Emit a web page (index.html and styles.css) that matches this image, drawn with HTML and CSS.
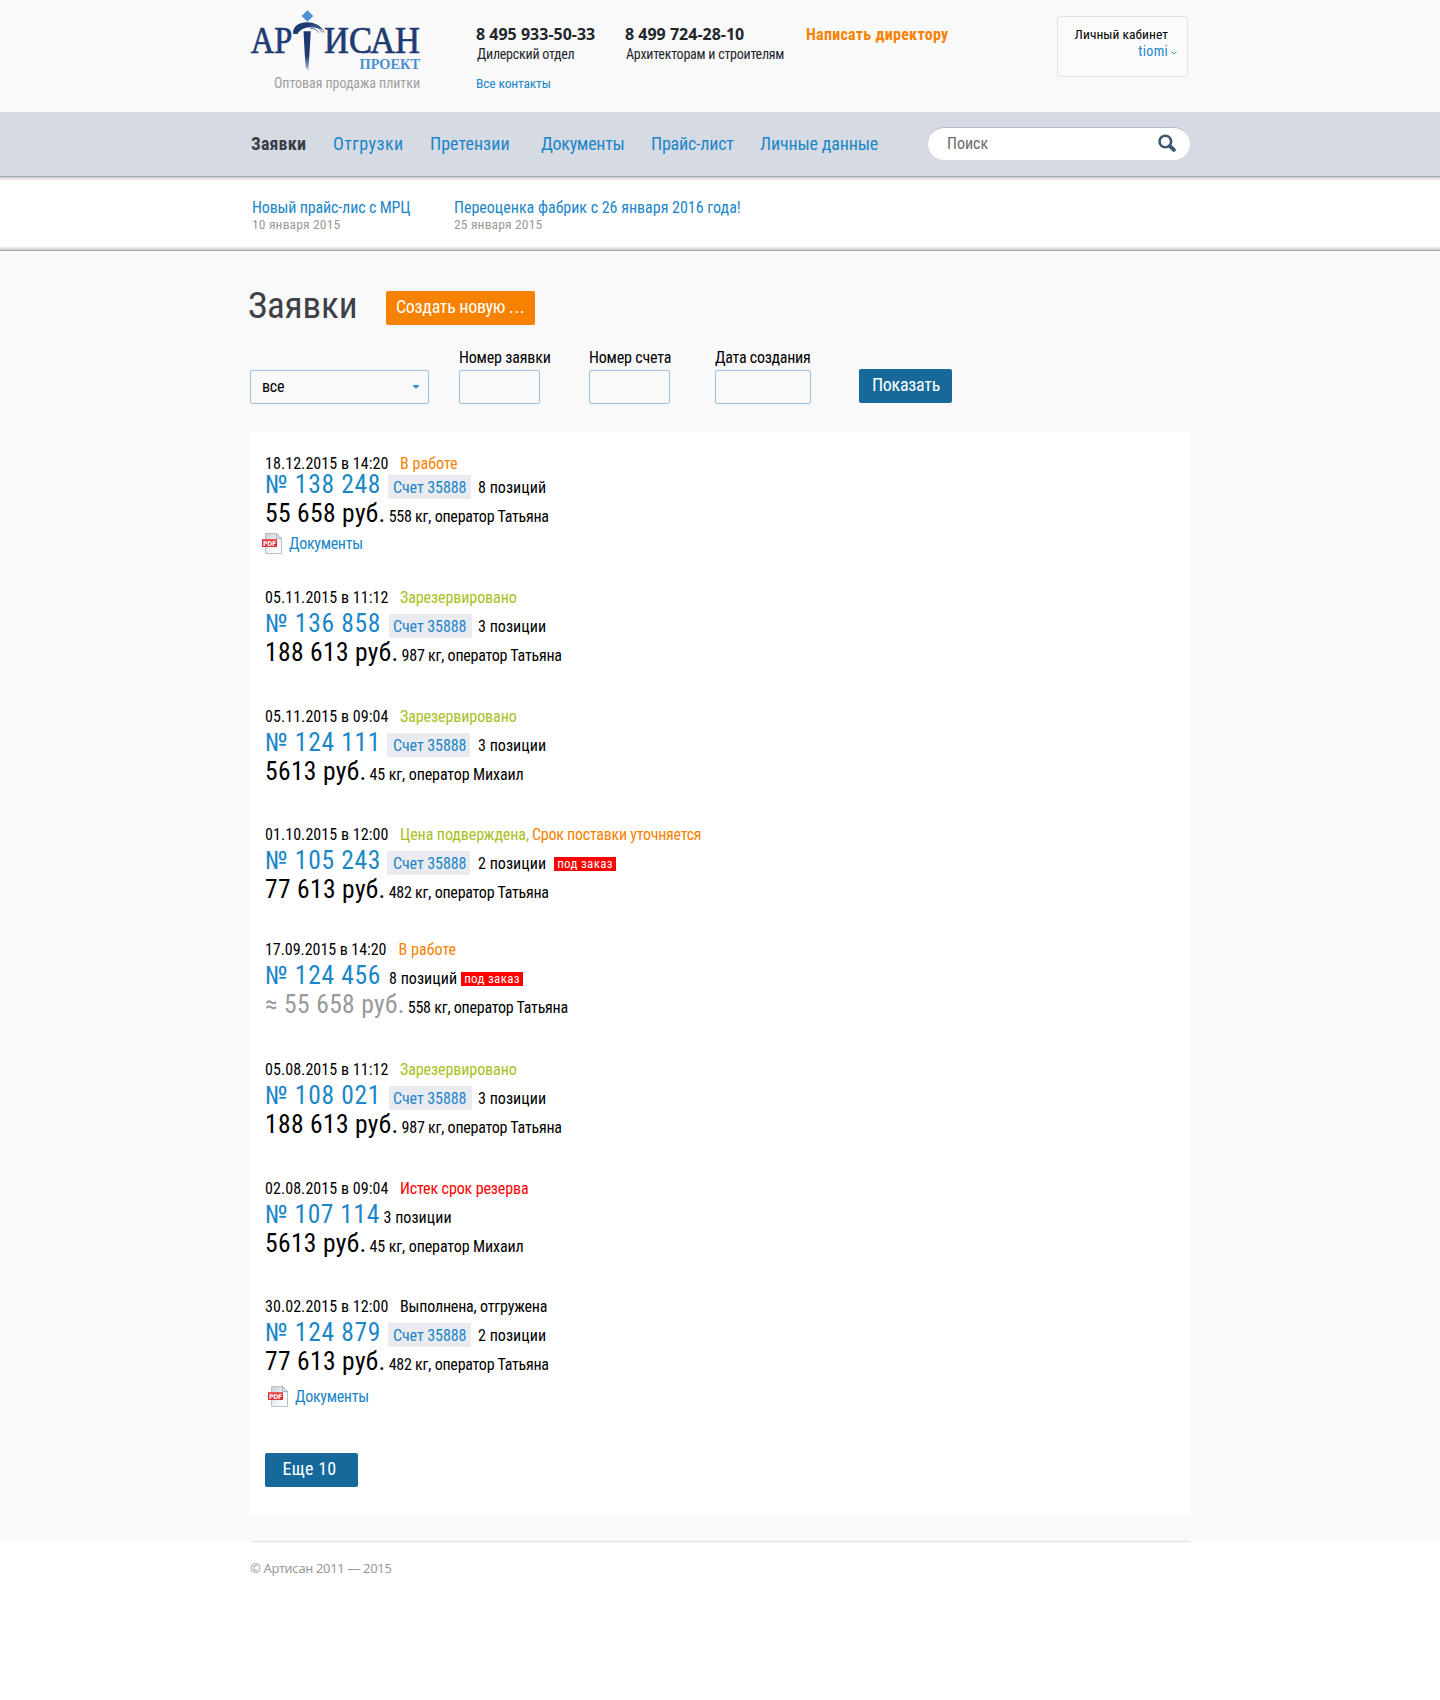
FILE: index.html
```html
<!DOCTYPE html>
<html lang="ru">
<head>
<meta charset="utf-8">
<title>Артисан Проект — Заявки</title>
<link rel="stylesheet" href="styles.css">
</head>
<body>
<svg width="0" height="0" class="sprite" aria-hidden="true">
  <defs>
    <linearGradient id="sheet" x1="0" y1="0" x2="1" y2="1"><stop offset="0" stop-color="#c3ccd5"/><stop offset=".55" stop-color="#f1f4f6"/><stop offset="1" stop-color="#fff"/></linearGradient>
    <linearGradient id="label" x1="0" y1="0" x2="0" y2="1"><stop offset="0" stop-color="#f0605f"/><stop offset=".5" stop-color="#d81f26"/><stop offset="1" stop-color="#e0353a"/></linearGradient>
    <symbol id="pdf" viewBox="0 0 20 21">
      <path d="M3.5.5h11l5 5v15h-16z" fill="url(#sheet)" stroke="#b3c1cb"/>
      <path d="M14.5.5v5h5z" fill="#dfe6eb" stroke="#a3b3bf"/>
      <rect x="0" y="6" width="15" height="8" fill="url(#label)"/>
      <text x="1" y="12.6" class="pdf-text" textLength="13" lengthAdjust="spacingAndGlyphs">PDF</text>
    </symbol>
  </defs>
</svg>

<header class="header">
  <div class="wrap header-row">
    <a class="brand">
      <svg class="logo" width="172" height="67" viewBox="0 0 172 67">
        <defs><linearGradient id="shaft" x1="0" y1="0" x2="0" y2="1"><stop offset="0" stop-color="#1d3b72"/><stop offset=".6" stop-color="#1d3b72"/><stop offset="1" stop-color="#1d3b72" stop-opacity=".15"/></linearGradient></defs>
        <path d="M57.4 2.2l5.8 5.8-5.8 5.8L51.6 8z" fill="#4a90d2"/>
        <path d="M43.2 26C42.200 18.500 49 14.300 57 14.300c7 0 12.500 2.800 16 7.700-4.600-2.300-9-3-13.500-2.700C53 19.700 49.500 22.600 47.500 26z" fill="#1d3b72"/>
        <path d="M60 17.200c6 .3 9.600 3 12 7.300M64 16.500c5 1.200 8.400 3.700 10.300 8M60 20.200c4 0 7 1.600 8.600 4.400" fill="none" stroke="#4c6797" stroke-width=".9"/>
        <path d="M53.500 23.200h7.300l-1.300 21.500-1.300 20-1.300-5-1.200 1-1-16z" fill="url(#shaft)"/>
        <text x=".8" y="45.300" class="logo-name" textLength="41.500" lengthAdjust="spacingAndGlyphs">АР</text>
        <text x="74" y="45.300" class="logo-name" textLength="96" lengthAdjust="spacingAndGlyphs">ИСАН</text>
        <text x="109.500" y="60.800" class="logo-sub" textLength="60.500" lengthAdjust="spacingAndGlyphs">ПРОЕКТ</text>
      </svg>
      <span class="tagline">Оптовая продажа плитки</span>
    </a>
    <div class="contact contact-dealer">
      <b class="phone">8 495 933-50-33</b>
      <span class="dept">Дилерский отдел</span>
      <a class="all-contacts">Все контакты</a>
    </div>
    <div class="contact contact-arch">
      <b class="phone">8 499 724-28-10</b>
      <span class="dept">Архитекторам и строителям</span>
    </div>
    <a class="director">Написать директору</a>
    <div class="account">
      <span class="account-title">Личный кабинет</span>
      <a class="account-user">tiomi<svg class="chevron" width="6" height="4" viewBox="0 0 6 4"><path d="M.5.500L3 3 5.500.5" fill="none" stroke="#1b86c8" stroke-width=".9"/></svg></a>
    </div>
  </div>
</header>

<nav class="nav">
  <div class="wrap nav-row">
    <a class="n1">Заявки</a><a class="n2">Отгрузки</a><a class="n3">Претензии</a><a class="n4">Документы</a><a class="n5">Прайс-лист</a><a class="n6">Личные данные</a>
    <div class="search">
      <span>Поиск</span>
      <svg width="18" height="18" viewBox="0 0 18 18"><circle cx="7.300" cy="7.500" r="5.800" fill="none" stroke="#3f5872" stroke-width="2.600"/><path d="M11.800 12l4.100 3.900" stroke="#3f5872" stroke-width="3.800" stroke-linecap="round"/></svg>
    </div>
  </div>
</nav>

<section class="news">
  <div class="wrap news-row">
    <div class="news-item"><a>Новый прайс-лис с МРЦ</a><time>10 января 2015</time></div>
    <div class="news-item"><a class="long">Переоценка фабрик с 26 января 2016 года!</a><time>25 января 2015</time></div>
  </div>
</section>

<main class="main">
  <div class="wrap">
    <div class="title-row">
      <h1>Заявки</h1>
      <button class="btn btn-orange">Создать новую <span class="dots">...</span></button>
    </div>
    <form class="filters">
      <div class="select"><span>все</span><svg width="6" height="4" viewBox="0 0 6 4"><path d="M0 0h6v1L3 4 0 1z" fill="#3f8fd6"/></svg></div>
      <label class="field f-order"><span>Номер заявки</span><i></i></label>
      <label class="field f-bill"><span>Номер счета</span><i></i></label>
      <label class="field f-date"><span>Дата создания</span><i></i></label>
      <button type="button" class="btn btn-blue btn-show">Показать</button>
    </form>

    <div class="panel">
      <article class="order o1">
        <div class="when"><time>18.12.2015 в 14:20</time><span class="st-work">В работе</span></div>
        <div class="line"><a class="num">№ 138 248</a><a class="bill">Счет 35888</a><span class="count">8 позиций</span></div>
        <div class="line"><span class="price">55 658 руб.</span><span class="meta">558 кг, оператор Татьяна</span></div>
        <a class="docs"><svg width="20" height="21"><use href="#pdf"/></svg>Документы</a>
      </article>
      <article class="order o2">
        <div class="when"><time>05.11.2015 в 11:12</time><span class="st-ok">Зарезервировано</span></div>
        <div class="line"><a class="num">№ 136 858</a><a class="bill right">Счет 35888</a><span class="count">3 позиции</span></div>
        <div class="line"><span class="price">188 613 руб.</span><span class="meta">987 кг, оператор Татьяна</span></div>
      </article>
      <article class="order o3">
        <div class="when"><time>05.11.2015 в 09:04</time><span class="st-ok">Зарезервировано</span></div>
        <div class="line"><a class="num">№ 124 111</a><a class="bill left">Счет 35888</a><span class="count">3 позиции</span></div>
        <div class="line"><span class="price">5613 руб.</span><span class="meta mikhail">45 кг, оператор Михаил</span></div>
      </article>
      <article class="order o4">
        <div class="when"><time>01.10.2015 в 12:00</time><span class="st-ok">Цена подверждена,</span><span class="st-work term">Срок поставки уточняется</span></div>
        <div class="line"><a class="num">№ 105 243</a><a class="bill left">Счет 35888</a><span class="count">2 позиции</span><span class="tag">под заказ</span></div>
        <div class="line"><span class="price">77 613 руб.</span><span class="meta">482 кг, оператор Татьяна</span></div>
      </article>
      <article class="order o5">
        <div class="when"><time>17.09.2015 в 14:20</time><span class="st-work">В работе</span></div>
        <div class="line"><a class="num">№ 124 456</a><span class="count">8 позиций</span><span class="tag">под заказ</span></div>
        <div class="line"><span class="price approx">≈ 55 658 руб.</span><span class="meta">558 кг, оператор Татьяна</span></div>
      </article>
      <article class="order o6">
        <div class="when"><time>05.08.2015 в 11:12</time><span class="st-ok">Зарезервировано</span></div>
        <div class="line"><a class="num">№ 108 021</a><a class="bill right">Счет 35888</a><span class="count">3 позиции</span></div>
        <div class="line"><span class="price">188 613 руб.</span><span class="meta">987 кг, оператор Татьяна</span></div>
      </article>
      <article class="order o7">
        <div class="when"><time>02.08.2015 в 09:04</time><span class="st-expired">Истек срок резерва</span></div>
        <div class="line"><a class="num">№ 107 114</a><span class="count">3 позиции</span></div>
        <div class="line"><span class="price">5613 руб.</span><span class="meta mikhail">45 кг, оператор Михаил</span></div>
      </article>
      <article class="order o8">
        <div class="when"><time>30.02.2015 в 12:00</time><span class="st-done">Выполнена, отгружена</span></div>
        <div class="line"><a class="num">№ 124 879</a><a class="bill">Счет 35888</a><span class="count">2 позиции</span></div>
        <div class="line"><span class="price">77 613 руб.</span><span class="meta">482 кг, оператор Татьяна</span></div>
        <a class="docs"><svg width="20" height="21"><use href="#pdf"/></svg>Документы</a>
      </article>
      <button class="btn btn-blue btn-more">Еще 10</button>
    </div>
  </div>
</main>

<footer class="wrap footer">© Артисан 2011 — 2015</footer>
</body>
</html>
```
FILE: styles.css
```css
* { box-sizing: border-box; }
body {
  margin: 0;
  min-height: 1700px;
  background: #fff;
  color: #000;
  font: 16px/20px Roboto, "Noto Sans", sans-serif;
  font-stretch: 75%;
}
a { color: #1b86c8; text-decoration: none; }
.wrap { width: 940px; margin: 0 auto; }
.sprite { position: absolute; }

/* header */
.header { height: 112px; background: #f9f9f9; }
.header-row { display: flex; align-items: flex-start; }
.brand { width: 226px; padding-top: 8px; display: flex; flex-direction: column; }
.logo { display: block; overflow: visible; }
.logo-name { font: 37px "Liberation Serif", serif; fill: #1d3b72; stroke: #1d3b72; stroke-width: .7px; }
.logo-sub { font: bold 14.500px "Liberation Serif", serif; fill: #4a90d2; }
.tagline { width: 170px; text-align: right; font-size: 14px; line-height: 16px; color: #a0a0a0; letter-spacing: -.05px; }
.contact { display: flex; flex-direction: column; padding-top: 24px; white-space: nowrap; color: #22262b; }
.contact-dealer { width: 149px; }
.contact-arch { width: 181px; }
.phone { font: bold 16px/20px "Noto Sans", sans-serif; }
.dept { margin: 1px 0 0 1px; font-size: 14px; line-height: 18px; letter-spacing: -.24px; }
.all-contacts { margin-top: 11px; font-size: 13.500px; line-height: 18px; letter-spacing: -.15px; }
.director { width: 251px; padding-top: 25px; font-weight: 700; color: #f68200; letter-spacing: .28px; }
.account {
  width: 131px; height: 61px; margin-top: 16px; padding: 9px 19px 0 0;
  display: flex; flex-direction: column; align-items: flex-end;
  border: 1px solid #dde3ec; border-radius: 3px; background: #fbfbfb;
  font-size: 13.500px; line-height: 17px;
}
.account-title { letter-spacing: .04px; }
.account-user { display: flex; align-items: center; margin-right: -9px; font-size: 14px; letter-spacing: .3px; }
.chevron { margin: 2px 0 0 3px; }

/* navigation */
.nav { height: 65px; background: #d6dae2; border-bottom: 1px solid #a2aab1; }
.nav-row { display: flex; font-size: 18px; line-height: 64px; white-space: nowrap; }
.n1 { width: 83px; padding-left: 1px; font-weight: 700; color: #3b3e47; letter-spacing: .15px; }
.n2 { width: 97px; letter-spacing: .4px; }
.n3 { width: 111px; letter-spacing: .03px; }
.n4 { width: 110px; letter-spacing: -.3px; }
.n5 { width: 109px; letter-spacing: -.22px; }
.n6 { width: 168px; letter-spacing: -.16px; }
.search {
  width: 262px; height: 33px; margin-top: 15px; padding: 0 14px 0 19px;
  display: flex; align-items: center; justify-content: space-between;
  border-top: 1px solid #b4bac8; border-radius: 17px; background: #fff;
  font-size: 16px; line-height: 32px; color: #6b6b6b;
}
.search svg { margin-top: -3px; }

/* news */
.news {
  height: 74px; padding-top: 22px; border-bottom: 1px solid #a2aab1;
  background: linear-gradient(#c9cccd, #f3f3f3 3px, #fff 4px, #fff 69px, #f1f1f1 70px, #c9cccd 73px);
}
.news-row { display: flex; padding-left: 2px; }
.news-item { width: 202px; display: flex; flex-direction: column; white-space: nowrap; line-height: 18px; letter-spacing: -.15px; }
.news-item .long { letter-spacing: 0; }
.news-item time { margin-top: -1px; font-size: 13.500px; line-height: 16px; color: #999; letter-spacing: .17px; }

/* main */
.main { height: 1290px; background: #f9f9f9; padding-top: 32px; }
.title-row { display: flex; align-items: flex-start; height: 44px; }
h1 { width: 138px; margin: 1px 0 0 -2px; font-size: 37px; line-height: 44px; font-weight: 400; color: #3d4047; letter-spacing: -.1px; }
.btn {
  height: 34px; padding: 0 0 2px; border: 0; border-radius: 2px;
  font: inherit; font-size: 18px; line-height: 32px; color: #fff; white-space: nowrap;
}
.btn-orange { width: 149px; margin-top: 8px; background: #f68200; letter-spacing: -.3px; }
.dots { letter-spacing: .6px; }
.btn-blue { width: 93px; background: #17699c; }
.btn-show { margin-bottom: 1px; letter-spacing: -.27px; padding-left: 1px; }
.btn-more { display: block; margin-top: 46px; padding-right: 4px; letter-spacing: .25px; }

.filters { display: flex; align-items: flex-end; margin-top: 21px; height: 56px; }
.select {
  width: 179px; height: 34px; margin-right: 30px; padding: 0 9px 0 11px;
  display: flex; align-items: center; justify-content: space-between;
  border: 1px solid #9cc3e2; border-radius: 2px; letter-spacing: -.2px;
}
.field { display: flex; flex-direction: column; white-space: nowrap; letter-spacing: -.17px; }
.field i { width: 81px; height: 34px; margin-top: 2px; border: 1px solid #9cc3e2; border-radius: 2px; }
.f-order { width: 130px; }
.f-bill { width: 126px; }
.f-date { width: 144px; letter-spacing: -.27px; }
.f-date i { width: 96px; }

/* orders */
.panel { width: 941px; height: 1084px; margin-top: 27px; padding: 22px 15px 0; background: #fff; }
.order { white-space: nowrap; }
.o2 { margin-top: 33px; }
.o3, .o7 { margin-top: 39px; }
.o4, .o8 { margin-top: 38px; }
.o5 { margin-top: 35px; }
.o6 { margin-top: 40px; }
.when { display: flex; height: 22px; line-height: 21px; }
.o1 .when { height: 17px; }
.when time { width: 135px; letter-spacing: .06px; }
.o5 .when time { width: 133.500px; letter-spacing: -.05px; }
.st-work { color: #f68200; letter-spacing: .05px; }
.st-work.term { margin-left: 3px; letter-spacing: -.25px; }
.st-ok { color: #a9c023; letter-spacing: -.08px; }
.st-expired { color: #f00; letter-spacing: -.12px; }
.st-done { letter-spacing: -.19px; }
.line { display: flex; align-items: baseline; height: 29px; line-height: 21px; }
.num { width: 123px; font-size: 25.500px; line-height: 29px; letter-spacing: .7px; }
.bill { width: 83px; height: 24px; margin-right: 7px; padding-left: 5px; line-height: 25px; background: #e9ebf0; letter-spacing: -.08px; }
.bill.left { margin-left: -1px; margin-right: 8px; padding-left: 6px; }
.bill.right { margin-left: 1px; margin-right: 6px; padding-left: 4px; }
.o7 .num { width: 118.500px; letter-spacing: .55px; }
.count { width: 76px; letter-spacing: .04px; }
.o5 .count { width: 73px; padding-left: 1px; }
.tag { align-self: flex-start; width: 62px; height: 14px; margin-top: 11px; text-align: center; background: #f00; color: #fff; font-size: 13px; line-height: 14px; letter-spacing: .3px; }
.price { margin-right: 3px; font-size: 25.500px; line-height: 29px; letter-spacing: .35px; }
.approx { color: #999; }
.meta { letter-spacing: -.23px; }
.mikhail { letter-spacing: -.1px; }
.docs { display: flex; align-items: flex-start; margin: 5px 0 0 -3px; height: 21px; line-height: 21px; letter-spacing: -.32px; }
.docs svg { margin-right: 7px; }
.o8 .docs { margin: 10px 0 0 3px; }
.pdf-text { font: bold 6.500px "DejaVu Sans", sans-serif; fill: #fff; }

.footer { padding: 17px 0 0; font: 13px/20px "Noto Sans", sans-serif; letter-spacing: -.34px; color: #999; position: relative; }
.footer::before { content: ""; position: absolute; left: 1px; right: 0; top: 0; height: 1px; background: #dfe1ea; }
```
